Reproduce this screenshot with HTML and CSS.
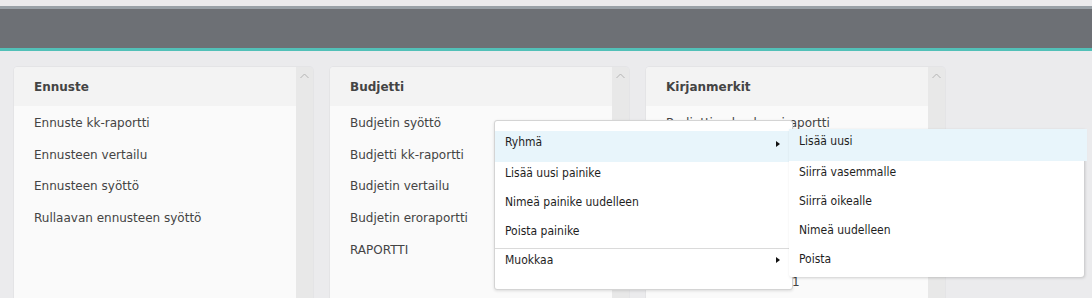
FILE: index.html
```html
<!DOCTYPE html>
<html lang="fi">
<head>
    <meta charset="UTF-8">
    <meta name="viewport" content="width=device-width, initial-scale=1.0">
    <title>Raportit</title>
    <link rel="stylesheet" href="styles.css">
</head>
<body>

    <!-- Yläpalkki -->
    <div class="topbar"></div>

    <!-- Korttirivi -->
    <div class="cards">
        <div class="card">
            <div class="card-main">
                <div class="card-header">Ennuste</div>
                <ul class="card-list">
                    <li>Ennuste kk-raportti</li>
                    <li>Ennusteen vertailu</li>
                    <li>Ennusteen syöttö</li>
                    <li>Rullaavan ennusteen syöttö</li>
                </ul>
            </div>
            <div class="scrollbar">
                <svg width="9" height="6" viewBox="0 0 9 6"><path d="M0.5 5 L4.5 1 L8.5 5" fill="none" stroke="#b4b4b4" stroke-width="1"/></svg>
            </div>
        </div>

        <div class="card">
            <div class="card-main">
                <div class="card-header">Budjetti</div>
                <ul class="card-list">
                    <li>Budjetin syöttö</li>
                    <li>Budjetti kk-raportti</li>
                    <li>Budjetin vertailu</li>
                    <li>Budjetin eroraportti</li>
                    <li>RAPORTTI</li>
                </ul>
            </div>
            <div class="scrollbar">
                <svg width="9" height="6" viewBox="0 0 9 6"><path d="M0.5 5 L4.5 1 L8.5 5" fill="none" stroke="#b4b4b4" stroke-width="1"/></svg>
            </div>
        </div>

        <div class="card">
            <div class="card-main">
                <div class="card-header">Kirjanmerkit</div>
                <ul class="card-list">
                    <li>Budjettien kuukausiraportti</li>
                    <li>Tuloslaskelma</li>
                    <li>Tase</li>
                    <li>Kassavirta</li>
                    <li>Henkilöstö</li>
                    <li>Kuukausiraportti nro 1</li>
                </ul>
            </div>
            <div class="scrollbar">
                <svg width="9" height="6" viewBox="0 0 9 6"><path d="M0.5 5 L4.5 1 L8.5 5" fill="none" stroke="#b4b4b4" stroke-width="1"/></svg>
            </div>
        </div>
    </div>

    <!-- Kontekstivalikko -->
    <div class="menu">
        <div class="menu-item active">Ryhmä <span class="arrow"></span></div>
        <div class="menu-item">Lisää uusi painike</div>
        <div class="menu-item">Nimeä painike uudelleen</div>
        <div class="menu-item">Poista painike</div>
        <div class="menu-sep"></div>
        <div class="menu-item">Muokkaa <span class="arrow"></span></div>

        <!-- Alavalikko -->
        <div class="submenu">
            <div class="menu-item active">Lisää uusi</div>
            <div class="menu-item">Siirrä vasemmalle</div>
            <div class="menu-item">Siirrä oikealle</div>
            <div class="menu-item">Nimeä uudelleen</div>
            <div class="menu-item">Poista</div>
        </div>
    </div>

</body>
</html>
```

FILE: styles.css
```css
body {
    font-family: "DejaVu Sans", Verdana, sans-serif;
    background-color: #ebebed;
    margin: 0;
    padding: 0;
    overflow: hidden;
}

.topbar {
    margin-top: 6px;
    height: 39px;
    background-color: #6d7075;
    border-top: 3px solid #99a1a7;
    border-bottom: 3px solid #52c0b8;
}

.cards {
    display: flex;
    gap: 17px;
    padding: 16px 14px 0;
}

.card {
    width: 299px;
    height: 260px;
    display: flex;
    border-radius: 4px 4px 0 0;
    overflow: hidden;
    box-shadow: 0 0 0 1px #e4e4e6;
}

.card-main {
    flex: 1;
    background-color: #fafafa;
}

.card-header {
    height: 39px;
    line-height: 40px;
    padding-left: 20px;
    background-color: #f3f3f3;
    font-weight: bold;
    font-size: 12px;
    color: #444;
}

.card-list {
    list-style: none;
    margin: 0;
    padding: 2px 0 0;
}

.card-list li {
    line-height: 31.7px;
    padding-left: 20px;
    font-size: 12px;
    color: #444;
    white-space: nowrap;
}

.scrollbar {
    width: 17px;
    background-color: #e8e8e8;
    text-align: center;
    padding-top: 6px;
}

.scrollbar svg {
    display: block;
    margin: 0 auto;
}

/* valikot */
.menu {
    position: absolute;
    left: 494px;
    top: 120px;
    width: 297px;
    padding: 10px 0 11px;
    background-color: #fff;
    border: 1px solid #d4d4d4;
    border-radius: 3px;
    box-shadow: 0 1px 3px rgba(0, 0, 0, 0.12);
    font-family: "DejaVu Sans Condensed", "Liberation Sans", sans-serif;
    font-size: 12px;
    color: #1e1e1e;
}

.menu-item {
    position: relative;
    height: 29px;
    box-sizing: border-box;
    padding: 4px 10px 0;
    line-height: 15px;
    white-space: nowrap;
}

.menu-item.active {
    height: 31px;
    background-color: #e8f5fb;
}

.arrow {
    position: absolute;
    left: 281px;
    top: 8px;
    width: 0;
    height: 0;
    border-top: 3px solid transparent;
    border-bottom: 3px solid transparent;
    border-left: 4px solid #111;
}

.menu .menu-item.active .arrow {
    top: 10px;
}

.menu-sep {
    height: 1px;
    margin-top: -1px;
    background-color: #dadada;
}

.submenu {
    position: absolute;
    left: 294px;
    top: 8px;
    width: 295px;
    background-color: #fff;
    border-radius: 0 0 3px 3px;
    box-shadow: 1px 1px 3px rgba(0, 0, 0, 0.18);
}

.submenu .menu-item.active {
    height: 32px;
    padding-top: 5px;
    margin-right: -3px;
}
```
